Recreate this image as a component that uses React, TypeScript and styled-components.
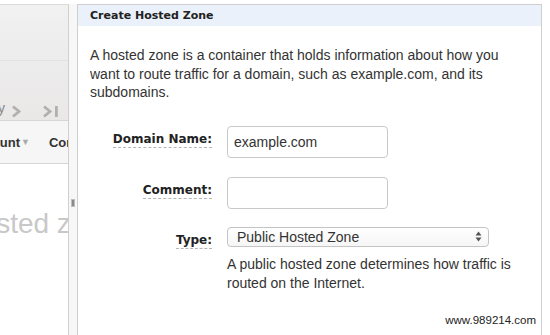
import React from 'react';
import styled, { createGlobalStyle } from 'styled-components';

const GlobalStyle = createGlobalStyle`
  html, body {
    margin: 0;
    padding: 0;
    background: #ffffff;
  }
  body {
    font-family: "Liberation Sans", Arial, sans-serif;
    color: #333;
  }
`;

const Page = styled.div`
  display: flex;
  width: 550px;
  height: 335px;
  padding-top: 4px;
  box-sizing: border-box;
  overflow: hidden;
  background: #fff;
`;

/* ---------- left list pane (clipped) ---------- */

const ListPane = styled.div`
  width: 68px;
  flex: none;
  display: flex;
  flex-direction: column;
  border-top: 1px solid #dcdcdc;
  border-right: 1px solid #cfcfcf;
  background: #fff;
  overflow: hidden;
  white-space: nowrap;
`;

const ListTop = styled.div`
  height: 55px;
  background: linear-gradient(#f1f1f1, #ececec);
  border-bottom: 1px solid #e2e2e2;
`;

const PagerRow = styled.div`
  height: 60px;
  display: flex;
  align-items: flex-end;
  gap: 6px;
  padding-bottom: 2px;
  box-sizing: border-box;
  background: linear-gradient(#ececec, #ebe7e7);
  border-bottom: 1px solid #d6d6d6;
  color: #aaa;
  font-size: 14px;
  line-height: 20px;
`;

const PagerText = styled.span`
  margin-left: -2px;
  color: #888;
`;

const ToolRow = styled.div`
  height: 42px;
  display: flex;
  align-items: center;
  background: #f6f6f6;
  border-bottom: 1px solid #d6d6d6;
  font-weight: bold;
  font-size: 13px;
  color: #333;
`;

const ToolItem = styled.span<{ $shift?: number }>`
  margin-left: ${p => p.$shift ?? 0}px;
  display: inline-flex;
  align-items: center;
`;

const Caret = styled.span`
  color: #aaa;
  font-size: 9px;
  margin-left: 1px;
`;

const ToolSep = styled.span`
  width: 1px;
  height: 20px;
  background: #d4d4d4;
  margin: 0 9px 0 10px;
`;

const EmptyText = styled.div`
  margin: 44px 0 0 -35px;
  font-size: 28px;
  color: #c8c8c8;
`;

const Splitter = styled.div`
  width: 8px;
  flex: none;
  display: flex;
  align-items: center;
  justify-content: center;
  padding-top: 66px;
  box-sizing: border-box;
  background: #f7f7f7;
`;

const Grip = styled.div`
  width: 4px;
  height: 8px;
  background: #8a8a8a;
  border: 1px solid #bdbdbd;
  box-sizing: border-box;
`;

/* ---------- right form pane ---------- */

const FormPane = styled.div`
  width: 463px;
  flex: none;
  display: flex;
  flex-direction: column;
  border: 1px solid #cfcfcf;
  border-bottom: none;
  background: #fff;
`;

const PaneHeader = styled.div`
  height: 21px;
  display: flex;
  align-items: center;
  padding-left: 12px;
  background: #eaf1fa;
  font-family: "DejaVu Sans", Verdana, sans-serif;
  font-weight: bold;
  font-size: 11px;
  color: #222;
`;

const Intro = styled.p`
  margin: 20px 0 0;
  padding: 0 12px;
  font-size: 14px;
  line-height: 18.5px;
  color: #333;
`;

const FormGrid = styled.div`
  display: grid;
  grid-template-columns: 134px 1fr;
  column-gap: 15px;
  margin-top: 24px;
`;

const Label = styled.div<{ $gap?: number }>`
  justify-self: end;
  align-self: start;
  margin-top: ${p => p.$gap ?? 0}px;
  padding-top: 3px;
`;

const LabelText = styled.span`
  font-family: "DejaVu Sans", Verdana, sans-serif;
  font-weight: bold;
  font-size: 12px;
  line-height: 14px;
  color: #222;
  border-bottom: 1px dashed #b5b5b5;
  padding-bottom: 1px;
`;

const Field = styled.div<{ $gap?: number }>`
  margin-top: ${p => p.$gap ?? 0}px;
`;

const TextBox = styled.div`
  width: 161px;
  height: 32px;
  box-sizing: border-box;
  border: 1px solid #c9c9c9;
  border-radius: 4px;
  display: flex;
  align-items: center;
  padding-left: 6px;
  font-size: 14px;
  color: #333;
  background: #fff;
`;

const SelectBox = styled.div`
  width: 262px;
  height: 20px;
  box-sizing: border-box;
  border: 1px solid #c4c4c4;
  border-radius: 4px;
  display: flex;
  align-items: center;
  justify-content: space-between;
  padding: 0 6px 0 9px;
  font-size: 14px;
  color: #333;
  background: linear-gradient(#ffffff, #f6f6f6);
`;

const Help = styled.p`
  margin: 8px 0 0;
  font-size: 14px;
  line-height: 19.5px;
  color: #333;
`;

const Footer = styled.div`
  flex: 1;
  display: flex;
  align-items: flex-end;
  justify-content: flex-end;
  padding: 0 5px 9px 0;
  font-size: 11.5px;
  color: #222;
`;

const Chevron: React.FC<{ bar?: boolean }> = ({ bar }) => (
  <svg width={bar ? 17 : 11} height="13" viewBox={bar ? '0 0 17 13' : '0 0 11 13'}>
    <path d="M2 1.5 L8 6.5 L2 11.5" fill="none" stroke="#b0b0b0" strokeWidth="2.8" />
    {bar ? <rect x="13" y="1" width="2.8" height="11" fill="#b0b0b0" /> : null}
  </svg>
);

const UpDown = () => (
  <svg width="7" height="11" viewBox="0 0 7 11">
    <path d="M3.5 0.5 L6.5 4.5 L0.5 4.5 Z" fill="#555" />
    <path d="M3.5 10.5 L6.5 6.5 L0.5 6.5 Z" fill="#555" />
  </svg>
);

export default function App() {
  return (
    <>
      <GlobalStyle />
      <Page>
        <ListPane>
          <ListTop />
          <PagerRow>
            <PagerText>y</PagerText>
            <Chevron />
            <span style={{ width: 8 }} />
            <Chevron bar />
          </PagerRow>
          <ToolRow>
            <ToolItem $shift={-32}>Account<Caret>▼</Caret></ToolItem>
            <ToolSep />
            <ToolItem>Comment</ToolItem>
          </ToolRow>
          <EmptyText>hosted zones</EmptyText>
        </ListPane>

        <Splitter>
          <Grip />
        </Splitter>

        <FormPane>
          <PaneHeader>Create Hosted Zone</PaneHeader>
          <Intro>
            A hosted zone is a container that holds information about how you
            want to route traffic for a domain, such as example.com, and its
            subdomains.
          </Intro>

          <FormGrid>
            <Label><LabelText>Domain Name:</LabelText></Label>
            <Field><TextBox>example.com</TextBox></Field>

            <Label $gap={19}><LabelText>Comment:</LabelText></Label>
            <Field $gap={19}><TextBox /></Field>

            <Label $gap={18}><LabelText>Type:</LabelText></Label>
            <Field $gap={18}>
              <SelectBox>
                <span>Public Hosted Zone</span>
                <UpDown />
              </SelectBox>
              <Help>
                A public hosted zone determines how traffic is
                <br />
                routed on the Internet.
              </Help>
            </Field>
          </FormGrid>

          <Footer>www.989214.com</Footer>
        </FormPane>
      </Page>
    </>
  );
}
